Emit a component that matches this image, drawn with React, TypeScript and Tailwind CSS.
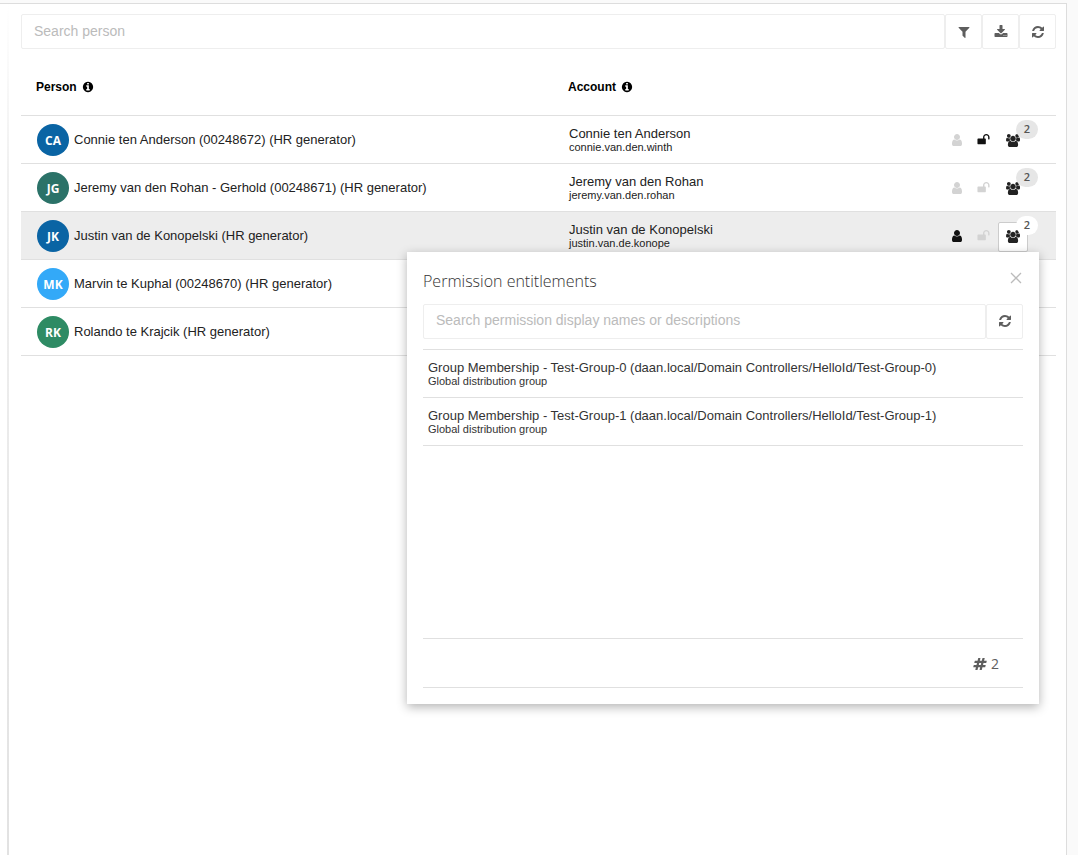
import React, { useState } from "react";
import clsx from "clsx";

const icons = {
  refresh:
    "M1639 1056q0 5-1 7-64 268-268 434.5t-478 166.5q-146 0-282.5-55t-243.5-157l-129 129q-19 19-45 19t-45-19-19-45v-448q0-26 19-45t45-19h448q26 0 45 19t19 45-19 45l-137 137q71 66 161 102t187 36q134 0 250-65t186-179q11-17 53-117 8-23 30-23h192q13 0 22.5 9.5t9.5 22.5zm25-800v448q0 26-19 45t-45 19h-448q-26 0-45-19t-19-45 19-45l138-138q-148-137-349-137-134 0-250 65t-186 179q-11 17-53 117-8 23-30 23h-199q-13 0-22.5-9.5t-9.5-22.5v-7q65-268 270-434.5t480-166.5q146 0 284 55.5t245 156.5l130-129q19-19 45-19t45 19 19 45z",
  filter:
    "M1595 295q17 41-14 70l-493 493v742q0 42-39 59-13 5-25 5-27 0-45-19l-256-256q-19-19-19-45v-486l-493-493q-31-29-14-70 17-39 59-39h1280q42 0 59 39z",
  download:
    "M1344 1344q0-26-19-45t-45-19-45 19-19 45 19 45 45 19 45-19 19-45zm256 0q0-26-19-45t-45-19-45 19-19 45 19 45 45 19 45-19 19-45zm128-224v320q0 40-28 68t-68 28h-1472q-40 0-68-28t-28-68v-320q0-40 28-68t68-28h465l135 136q58 56 136 56t136-56l136-136h464q40 0 68 28t28 68zm-325-569q17 41-14 70l-448 448q-18 19-45 19t-45-19l-448-448q-31-29-14-70 17-39 59-39h256v-448q0-26 19-45t45-19h256q26 0 45 19t19 45v448h256q42 0 59 39z",
  info: "M1152 1376v-160q0-14-9-23t-23-9h-96v-512q0-14-9-23t-23-9h-320q-14 0-23 9t-9 23v160q0 14 9 23t23 9h96v320h-96q-14 0-23 9t-9 23v160q0 14 9 23t23 9h448q14 0 23-9t9-23zm-128-896v-160q0-14-9-23t-23-9h-192q-14 0-23 9t-9 23v160q0 14 9 23t23 9h192q14 0 23-9t9-23zm640 416q0 209-103 385.5t-279.5 279.5-385.5 103-385.5-103-279.5-279.5-103-385.5 103-385.5 279.5-279.5 385.5-103 385.5 103 279.5 279.5 103 385.5z",
  user: "M1536 1399q0 109-62.5 187t-150.5 78h-854q-88 0-150.5-78t-62.5-187q0-85 8.5-160.5t31.5-152 58.5-131 94-89 134.5-34.5q131 128 313 128t313-128q76 0 134.5 34.5t94 89 58.5 131 31.5 152 8.5 160.5zm-256-887q0 159-112.5 271.5t-271.5 112.5-271.5-112.5-112.5-271.5 112.5-271.5 271.5-112.5 271.5 112.5 112.5 271.5z",
  unlock:
    "M1728 576v256q0 26-19 45t-45 19h-64q-26 0-45-19t-19-45v-256q0-106-75-181t-181-75-181 75-75 181v192h96q40 0 68 28t28 68v576q0 40-28 68t-68 28h-960q-40 0-68-28t-28-68v-576q0-40 28-68t68-28h672v-192q0-185 131.5-316.5t316.5-131.5 316.5 131.5 131.5 316.5z",
  users:
    "M657 896q-162 5-265 128h-134q-82 0-138-40.5t-56-118.5q0-353 124-353 6 0 43.5 21t97.5 42.5 119 21.5q67 0 133-23-5 37-5 66 0 159 93 293zm1071 637q0 120-73 189.5t-194 69.5h-874q-121 0-194-69.5t-73-189.5q0-53 3.5-103.5t14-109 26.5-108.5 43-97.5 62-81 85.5-53.5 111.5-20q10 0 43 21.5t73 48 107 48 135 21.5 135-21.5 107-48 73-48 43-21.5q61 0 111.5 20t85.5 53.5 62 81 43 97.5 26.5 108.5 14 109 3.5 103.5zm-1024-1277q0 106-75 181t-181 75-181-75-75-181 75-181 181-75 181 75 75 181zm704 384q0 159-112.5 271.5t-271.5 112.5-271.5-112.5-112.5-271.5 112.5-271.5 271.5-112.5 271.5 112.5 112.5 271.5zm576 225q0 78-56 118.5t-138 40.5h-134q-103-123-265-128 93-134 93-293 0-29-5-66 66 23 133 23 59 0 119-21.5t97.5-42.5 43.5-21q124 0 124 353zm-128-609q0 106-75 181t-181 75-181-75-75-181 75-181 181-75 181 75 75 181z",
  hashtag:
    "M991 1024l64-256h-254l-64 256h254zm768-504l-56 224q-7 24-31 24h-327l-64 256h311q15 0 25 12 10 14 6 28l-56 224q-5 24-31 24h-327l-81 328q-7 24-31 24h-224q-16 0-26-12-9-12-6-28l78-312h-254l-81 328q-7 24-31 24h-225q-15 0-25-12-9-12-6-28l78-312h-311q-15 0-25-12-9-12-6-28l56-224q7-24 31-24h327l64-256h-311q-15 0-25-12-10-14-6-28l56-224q5-24 31-24h327l81-328q7-24 32-24h224q15 0 25 12 9 12 6 28l-78 312h254l81-328q7-24 32-24h224q15 0 25 12 9 12 6 28l-78 312h311q15 0 25 12 9 12 6 28z",
};

interface IconProps {
  name: keyof typeof icons;
  className?: string;
}

const Icon = ({ name, className }: IconProps) => (
  <svg
    viewBox={name === "users" ? "64 0 1920 1792" : "0 0 1792 1792"}
    fill="currentColor"
    aria-hidden="true"
    className={clsx("shrink-0", className)}
  >
    <path d={icons[name]} />
  </svg>
);

interface Person {
  initials: string;
  color: string;
  name: string;
  account?: string;
  username?: string;
  userActive?: boolean;
  unlocked?: boolean;
  permissions?: number;
}

const people: Person[] = [
  {
    initials: "CA",
    color: "bg-[#0a64a4]",
    name: "Connie ten Anderson (00248672) (HR generator)",
    account: "Connie ten Anderson",
    username: "connie.van.den.winth",
    unlocked: true,
    permissions: 2,
  },
  {
    initials: "JG",
    color: "bg-[#2b7268]",
    name: "Jeremy van den Rohan - Gerhold (00248671) (HR generator)",
    account: "Jeremy van den Rohan",
    username: "jeremy.van.den.rohan",
    permissions: 2,
  },
  {
    initials: "JK",
    color: "bg-[#0a64a4]",
    name: "Justin van de Konopelski (HR generator)",
    account: "Justin van de Konopelski",
    username: "justin.van.de.konope",
    userActive: true,
    permissions: 2,
  },
  {
    initials: "MK",
    color: "bg-[#33a9f8]",
    name: "Marvin te Kuphal (00248670) (HR generator)",
  },
  {
    initials: "RK",
    color: "bg-[#2e8b64]",
    name: "Rolando te Krajcik (HR generator)",
  },
];

const entitlements = [
  {
    name: "Group Membership - Test-Group-0 (daan.local/Domain Controllers/HelloId/Test-Group-0)",
    description: "Global distribution group",
  },
  {
    name: "Group Membership - Test-Group-1 (daan.local/Domain Controllers/HelloId/Test-Group-1)",
    description: "Global distribution group",
  },
];

interface SearchBarProps {
  placeholder: string;
  actions: Array<{ label: string; icon: keyof typeof icons }>;
}

const SearchBar = ({ placeholder, actions }: SearchBarProps) => {
  const [query, setQuery] = useState("");

  return (
    <div className="flex h-[35px]">
      <input
        type="text"
        aria-label={placeholder}
        placeholder={placeholder}
        value={query}
        onChange={(e) => setQuery(e.target.value)}
        className="min-w-0 flex-1 rounded-[2px] border border-[#eeeeee] bg-white px-3 pb-[2px] text-sm text-[#333333] outline-none placeholder:text-[#bbbbbb]"
      />
      {actions.map((action) => (
        <button
          key={action.label}
          type="button"
          aria-label={action.label}
          className="flex w-[37px] items-center justify-center rounded-[2px] border border-[#eeeeee] bg-white text-[#5e5e5e]"
        >
          <Icon name={action.icon} className="size-[14px]" />
        </button>
      ))}
    </div>
  );
};

const PermissionDialog = ({ onClose }: { onClose: () => void }) => (
  <div
    role="dialog"
    aria-label="Permission entitlements"
    className="absolute top-full -right-[11px] z-10 flex h-[452px] w-[632px] flex-col bg-white px-4 pb-4 text-left shadow-[0_3px_10px_rgba(0,0,0,0.3)]"
  >
    <div className="flex h-[52px] shrink-0 items-center justify-between pt-1">
      <h2 className="pt-[2px] font-['Open_Sans',sans-serif] text-base font-light text-[#333333]">
        Permission entitlements
      </h2>
      <button type="button" aria-label="Close" onClick={onClose} className="pr-px pb-1 text-[#bbbbbb]">
        <svg viewBox="0 0 12 12" className="size-3" fill="none" stroke="currentColor" strokeWidth="1.3">
          <path d="M1 1l10 10M11 1L1 11" />
        </svg>
      </button>
    </div>
    <SearchBar
      placeholder="Search permission display names or descriptions"
      actions={[{ label: "Refresh permissions", icon: "refresh" }]}
    />
    <ul className="mt-[10px] flex-1 border-t border-[#e0e0e0]">
      {entitlements.map((item) => (
        <li
          key={item.name}
          className="flex h-12 flex-col justify-center border-b border-[#e0e0e0] px-[5px] text-[#333333]"
        >
          <span className="text-[13px] leading-[15px]">{item.name}</span>
          <span className="text-[11px] leading-3">{item.description}</span>
        </li>
      ))}
    </ul>
    <div className="flex h-[50px] shrink-0 items-center justify-end gap-1 border-y border-[#e0e0e0] pt-[2px] pr-6 text-[#5e5e5e]">
      <Icon name="hashtag" className="size-[14px]" />
      <span className="font-['Open_Sans',sans-serif] text-sm">{entitlements.length}</span>
    </div>
  </div>
);

interface RowActionsProps {
  person: Person;
  open: boolean;
  onToggle: () => void;
}

const RowActions = ({ person, open, onToggle }: RowActionsProps) => (
  <div className="flex items-center justify-end pt-[2px] pr-7">
    <button
      type="button"
      aria-label="Account status"
      className={clsx(
        "flex w-[27px] justify-center pb-[2px]",
        person.userActive ? "text-[#111111]" : "text-[#d3d3d3]",
      )}
    >
      <Icon name="user" className="size-[14px]" />
    </button>
    <button
      type="button"
      aria-label="Unlock account"
      className={clsx(
        "mr-px flex w-[27px] justify-center pb-[2px]",
        person.unlocked ? "text-[#111111]" : "text-[#d3d3d3]",
      )}
    >
      <Icon name="unlock" className="size-[13px]" />
    </button>
    <div className="relative">
      <button
        type="button"
        aria-label="Permissions"
        aria-expanded={open}
        onClick={onToggle}
        className={clsx(
          "flex size-[30px] items-center justify-center rounded-[2px] border pb-px text-[#222222]",
          open ? "border-[#cccccc] bg-white" : "border-transparent",
        )}
      >
        <Icon name="users" className="h-[13px] w-[14px]" />
      </button>
      <span
        className={clsx(
          "absolute -top-[6px] -right-[10px] flex h-[19px] w-[22px] items-center justify-center rounded-full font-['Open_Sans',sans-serif] text-[11px] font-semibold text-[#555555]",
          open ? "bg-white" : "bg-[#e6e6e6]",
        )}
      >
        {person.permissions}
      </span>
      {open && <PermissionDialog onClose={onToggle} />}
    </div>
  </div>
);

const App = () => {
  const [openRow, setOpenRow] = useState<string | null>("JK");

  const toggleRow = (initials: string) => {
    setOpenRow(openRow === initials ? null : initials);
  };

  return (
    <div className="flex min-h-screen flex-col bg-[#fafafa] pt-[3px] pr-[11px] font-['Liberation_Sans',Arial,sans-serif] text-[#222222]">
      <div className="flex flex-1 border-t border-r border-[#dddddd] bg-white pl-[7px]">
        {/* Left rule fades in from the top */}
        <div className="w-[2px] bg-linear-to-b from-white via-[#f0f0f0] via-20% to-[#e2e2e2]" />

        <main className="min-w-0 flex-1 pt-[10px] pr-[10px] pl-3">
          <SearchBar
            placeholder="Search person"
            actions={[
              { label: "Filter", icon: "filter" },
              { label: "Download", icon: "download" },
              { label: "Refresh", icon: "refresh" },
            ]}
          />

          <table className="mt-[10px] w-full table-fixed border-separate border-spacing-0 text-left text-[13px]">
            <colgroup>
              <col className="w-[532px]" />
              <col />
              <col className="w-[118px]" />
            </colgroup>
            <thead>
              <tr className="text-xs text-black">
                {["Person", "Account"].map((label) => (
                  <th
                    key={label}
                    className="h-[57px] border-b border-[#e0e0e0] p-0 pl-[15px] font-bold"
                  >
                    <span className="flex items-center gap-[5px]">
                      {label}
                      <Icon name="info" className="size-3" />
                    </span>
                  </th>
                ))}
                <th aria-label="Actions" className="border-b border-[#e0e0e0] p-0" />
              </tr>
            </thead>
            <tbody>
              {people.map((person) => {
                const open = openRow === person.initials;
                return (
                  <tr key={person.initials} className={clsx(open && "bg-[#ededed]")}>
                    <td className="h-12 border-b border-[#e0e0e0] p-0 pl-4">
                      <div className="flex items-center gap-[5px] whitespace-nowrap">
                        <span
                          className={clsx(
                            "flex size-8 shrink-0 items-center justify-center rounded-full pt-[2px] font-['Open_Sans',sans-serif] text-xs font-bold text-white",
                            person.color,
                          )}
                        >
                          {person.initials}
                        </span>
                        {person.name}
                      </div>
                    </td>
                    <td className="h-12 border-b border-[#e0e0e0] p-0 pl-4">
                      <div className="leading-[15px]">{person.account}</div>
                      <div className="text-[11px] leading-3">{person.username}</div>
                    </td>
                    <td className="h-12 border-b border-[#e0e0e0] p-0">
                      {person.permissions && (
                        <RowActions
                          person={person}
                          open={open}
                          onToggle={() => toggleRow(person.initials)}
                        />
                      )}
                    </td>
                  </tr>
                );
              })}
            </tbody>
          </table>
        </main>
      </div>
    </div>
  );
};

export default App;
